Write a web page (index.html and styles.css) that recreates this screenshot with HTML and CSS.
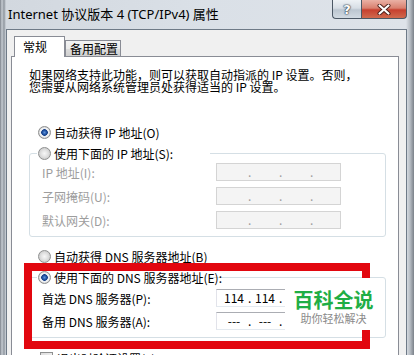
FILE: index.html
```html
<!DOCTYPE html>
<html lang="zh-CN">
<head>
    <meta charset="UTF-8">
    <meta name="viewport" content="width=device-width, initial-scale=1.0">
    <title>Internet 协议版本 4 (TCP/IPv4) 属性</title>
    <link rel="stylesheet" href="styles.css">
</head>
<body>
    <div class="window">
        <div class="titlebar">
            <span class="title">Internet 协议版本 4 (TCP/IPv4) 属性</span>
            <div class="caption-buttons">
                <span class="cap-btn help">?</span>
                <span class="cap-btn close">
                    <svg width="14" height="11" viewBox="0 0 14 11">
                        <path d="M2.5 1.5 L11.5 9.5 M11.5 1.5 L2.5 9.5" stroke="#4a1d17" stroke-width="4" stroke-linecap="round"/>
                        <path d="M2.5 1.5 L11.5 9.5 M11.5 1.5 L2.5 9.5" stroke="#fff" stroke-width="2.2" stroke-linecap="round"/>
                    </svg>
                </span>
            </div>
        </div>

        <div class="client">
            <div class="tabs">
                <span class="tab active">常规</span>
                <span class="tab">备用配置</span>
            </div>

            <div class="panel">
                <p class="intro">如果网络支持此功能，则可以获取自动指派的 IP 设置。否则，<br>您需要从网络系统管理员处获得适当的 IP 设置。</p>

                <div class="radio-row first"><span class="radio checked"></span>自动获得 IP 地址(O)</div>
                <fieldset class="group">
                    <legend><span class="legend-row"><span class="radio"></span>使用下面的 IP 地址(S):</span></legend>
                    <div class="rows">
                        <div class="field disabled"><span class="label">IP 地址(I):</span>
                            <span class="ip"><span class="seg"></span><span class="dot">.</span><span class="seg"></span><span class="dot">.</span><span class="seg"></span><span class="dot">.</span><span class="seg"></span></span>
                        </div>
                        <div class="field disabled"><span class="label">子网掩码(U):</span>
                            <span class="ip"><span class="seg"></span><span class="dot">.</span><span class="seg"></span><span class="dot">.</span><span class="seg"></span><span class="dot">.</span><span class="seg"></span></span>
                        </div>
                        <div class="field disabled"><span class="label">默认网关(D):</span>
                            <span class="ip"><span class="seg"></span><span class="dot">.</span><span class="seg"></span><span class="dot">.</span><span class="seg"></span><span class="dot">.</span><span class="seg"></span></span>
                        </div>
                    </div>
                </fieldset>

                <div class="radio-row dns"><span class="radio"></span>自动获得 DNS 服务器地址(B)</div>
                <fieldset class="group dns-group">
                    <legend><span class="legend-row"><span class="radio checked"></span>使用下面的 DNS 服务器地址(E):</span></legend>
                    <div class="rows">
                        <div class="field"><span class="label">首选 DNS 服务器(P):</span>
                            <span class="ip"><span class="seg">114</span><span class="dot">.</span><span class="seg">114</span><span class="dot">.</span><span class="seg"></span><span class="dot"></span><span class="seg"></span></span>
                        </div>
                        <div class="field"><span class="label">备用 DNS 服务器(A):</span>
                            <span class="ip"><span class="seg">---</span><span class="dot">.</span><span class="seg">---</span><span class="dot">.</span><span class="seg"></span><span class="dot"></span><span class="seg"></span></span>
                        </div>
                    </div>
                </fieldset>

                <div class="check-row"><span class="checkbox"></span>退出时验证设置(L)</div>
            </div>
        </div>

        <div class="highlight"></div>
        <div class="watermark">
            <span class="wm-title">百科全说</span>
            <span class="wm-sub">助你轻松解决</span>
        </div>
    </div>
</body>
</html>
```

FILE: styles.css
```css
* { box-sizing: border-box; margin: 0; padding: 0; }
body { font-family: "Noto Sans CJK SC", sans-serif; font-size: 12px; color: #000; background: #fff; }

.window {
    position: relative;
    width: 414px;
    height: 355px;
    overflow: hidden;
    display: flex;
    flex-direction: column;
    background: linear-gradient(90deg, #7b8189 0, #c6ccd3 2px, #8f969e 4px, #d2d8df 6px, #dae0e7 50%, #dee3e9 calc(100% - 8px), #b7bdc4 calc(100% - 4px), #7b8189 100%);
}

/* title bar */
.titlebar {
    height: 29px;
    flex: none;
    display: flex;
    align-items: flex-start;
    padding: 0 7px 0 8px;
}
.title {
    align-self: center;
    font-family: "Noto Sans", "Noto Sans CJK SC", sans-serif;
    font-size: 13px;
    line-height: 29px;
    white-space: nowrap;
}
.caption-buttons {
    display: flex;
    margin-left: auto;
}
.cap-btn {
    height: 19px;
    display: flex;
    align-items: center;
    justify-content: center;
    border-bottom: 1px solid #4c5865;
}
.help {
    width: 29px;
    border-left: 1px solid #4c5865;
    border-radius: 0 0 0 4px;
    background: linear-gradient(#eef2f5 0, #d7dee5 45%, #bcc6d0 55%, #d2dae2 100%);
    color: #fff;
    font-family: "DejaVu Sans", sans-serif;
    font-weight: bold;
    font-size: 13px;
    text-shadow: 0 0 1px #2e3a47, 0 0 1px #2e3a47, 0 0 2px #2e3a47;
}
.close {
    width: 46px;
    border-left: 1px solid #4c5865;
    border-right: 1px solid #4c5865;
    border-radius: 0 0 4px 0;
    background: linear-gradient(#eab1a5 0, #d9806f 45%, #c7402f 55%, #d06a4e 100%);
}

/* client area */
.client {
    flex: 1;
    margin: 0 7px 0 6px;
    border: 1px solid #6e7a87;
    border-bottom: none;
    background: #f0f0f0;
    padding-top: 6px;
}
.tabs {
    display: flex;
    align-items: flex-end;
    padding-left: 7px;
}
.tab {
    border: 1px solid #898c95;
    border-bottom: none;
    font-size: 12px;
    white-space: nowrap;
}
.tab.active {
    width: 51px;
    height: 21px;
    line-height: 19px;
    padding-left: 8px;
    background: #fff;
    margin-bottom: -1px;
    position: relative;
    z-index: 1;
}
.tab:not(.active) {
    width: 56px;
    height: 16px;
    line-height: 15px;
    padding-left: 4px;
    background: linear-gradient(#f3f3f3 0, #ebebeb 50%, #dddddd 51%, #cfcfcf 100%);
}

.panel {
    margin: 0 7px 0 4px;
    border: 1px solid #898c95;
    background: #fff;
    padding: 12px 12px 0 17px;
}
.intro {
    line-height: 12px;
    white-space: nowrap;
}

.radio-row {
    display: flex;
    align-items: center;
    height: 20px;
    padding-left: 9px;
    white-space: nowrap;
}
.radio-row.first { margin-top: 29px; }
.radio-row.dns { margin-top: 9px; }
.radio {
    flex: none;
    width: 13px;
    height: 13px;
    margin-right: 3px;
    border-radius: 50%;
    border: 1px solid #8e8f8f;
    background: radial-gradient(circle, #f7f7f7 0, #e4e4e4 3px, #d0d0d0 5.5px);
}
.radio.checked {
    background: radial-gradient(circle, #5f93da 0, #1d4f9f 2.2px, #183f86 3px, #dfe6ee 3.6px, #f4f4f4 4.5px, #cfd0d1 5.5px);
}

/* group boxes */
.group {
    border: 1px solid #d5dfe5;
    border-radius: 3px;
    padding: 0 0 7px;
    margin-top: 1px;
    min-width: 0;
}
.group legend {
    width: 173px;
    height: 20px;
    margin-left: 7px;
    padding-left: 1px;
}
.legend-row {
    display: flex;
    align-items: center;
    height: 20px;
    white-space: nowrap;
}
.rows {
    display: flex;
    flex-direction: column;
    gap: 6px;
}
.dns-group .rows {
    gap: 5px;
    padding-top: 2px;
}
.field {
    display: flex;
    align-items: center;
    height: 18px;
    padding-left: 12px;
    white-space: nowrap;
}
.label { width: 174px; }
.field.disabled .label { color: #9d9d9d; }

.ip {
    display: flex;
    width: 125px;
    height: 18px;
    padding-left: 3px;
    line-height: 16px;
    border: 1px solid;
    border-color: #abadb3 #dbdfe6 #e3e9ef #e2e3ea;
    background: #fff;
}
.field.disabled .ip {
    background: #f4f4f4;
    border-color: #d4d4d4;
    color: #9d9d9d;
}
.seg { width: 28px; text-align: center; }
.seg:last-child { flex: 1; }
.dot { width: 3px; text-align: center; }

.check-row {
    display: flex;
    align-items: flex-start;
    gap: 4px;
    margin-top: 14px;
    padding-left: 11px;
    line-height: 13px;
    white-space: nowrap;
}
.checkbox {
    width: 13px;
    height: 13px;
    border: 1px solid #8e8f8f;
    background: linear-gradient(135deg, #dcdcdc, #fbfbfb);
}

/* annotation drawn over the screenshot */
.highlight {
    position: absolute;
    left: 24px;
    top: 263px;
    width: 346px;
    height: 86px;
    border: 8px solid #e2070f;
}
.watermark {
    position: absolute;
    left: 285px;
    top: 278px;
    width: 97px;
    height: 52px;
    background: #fff;
    display: flex;
    flex-direction: column;
    align-items: center;
    padding-top: 11px;
}
.wm-title {
    font-size: 20px;
    font-weight: bold;
    line-height: 22px;
    color: #1fae45;
}
.wm-sub {
    font-size: 11px;
    line-height: 14px;
    color: #8a8a8a;
}
```
